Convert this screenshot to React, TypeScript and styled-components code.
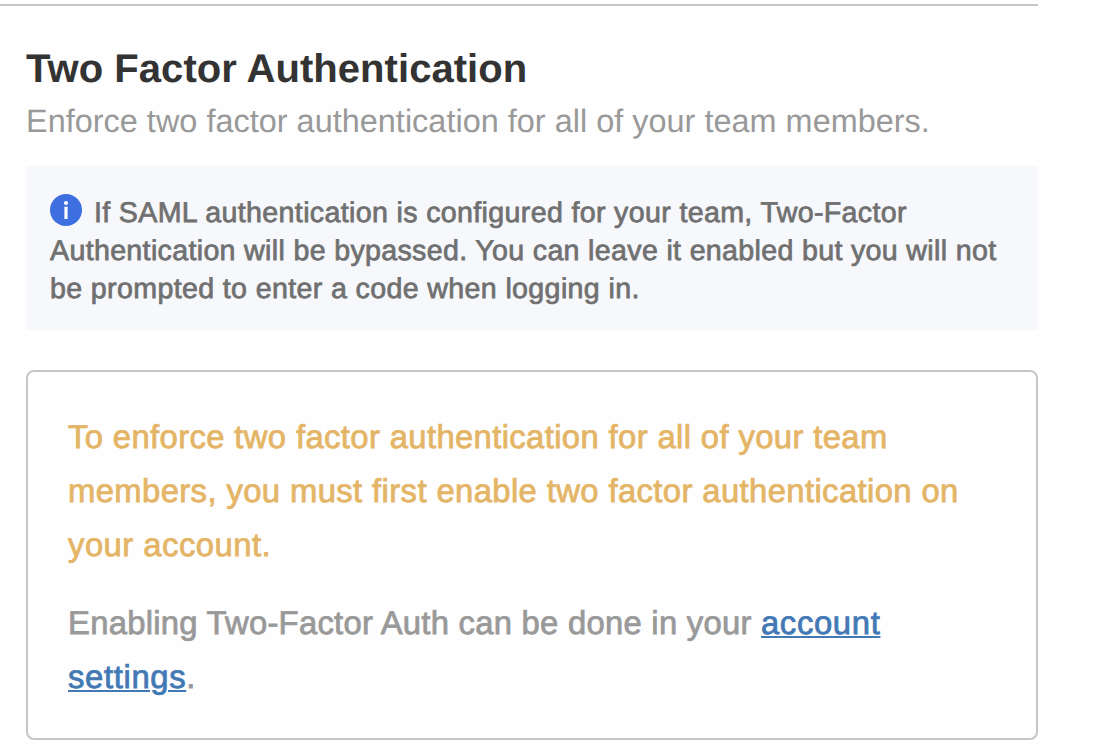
import React from "react";
import styled, { createGlobalStyle } from "styled-components";

const GlobalStyle = createGlobalStyle`
  * { box-sizing: border-box; }
  body {
    margin: 0; background: #fefefe; overflow: hidden;
    font-family: "Liberation Sans", Helvetica, Arial, sans-serif;
    text-rendering: geometricPrecision;
  }
`;
const Section = styled.section`
  width: 1038px;
  height: 754px;
  padding-top: 4px;
`;
const Divider = styled.div`height: 2px; background: #c5c5ca;`;
const Content = styled.div`padding: 38px 0 0 26px;`;
const Line = styled.span<{ $spacing?: number }>`
  display: block;
  white-space: nowrap;
  letter-spacing: ${(p) => p.$spacing ?? 0}px;
`;
const Title = styled.h2`
  margin: 0; font-size: 40px; line-height: 50px; font-weight: 700; color: #333;
`;
const Subtitle = styled.p`
  margin: 2px 0 0; font-size: 32.4px; line-height: 50px; color: #999;
`;
const Notice = styled.div`
  margin-top: 20px; height: 164px; padding: 28px 24px;
  background: #f6f8fc; color: #707070; font-size: 28.6px; line-height: 38px;
  -webkit-text-stroke: 0.75px currentColor;
`;
const NoticeLead = styled.div`display: flex; gap: 12px; height: 38px;`;
const InfoIcon = styled.svg`flex: none; width: 32px; height: 32px;`;
const Panel = styled.div`
  margin-top: 40px; height: 370px; padding: 38px 40px;
  border: 2px solid #c5c5ca; border-radius: 8px;
  font-size: 32.8px; line-height: 54px;
  -webkit-text-stroke: 0.8px currentColor;
`;
const Warning = styled.p`margin: 0; color: #e4b566;`;
const Hint = styled.p`margin: 24px 0 0; color: #999;`;
const Link = styled.a`
  color: #4279b4; letter-spacing: 0.65px; -webkit-text-stroke-color: #4279b4;
  text-decoration: underline; text-decoration-thickness: 2px; text-underline-offset: 2px;
`;

export default function App() {
  return (
    <Section>
      <GlobalStyle />
      <Divider />
      <Content>
        <Title><Line $spacing={0.05}>Two Factor Authentication</Line></Title>
        <Subtitle><Line $spacing={0.03}>Enforce two factor authentication for all of your team members.</Line></Subtitle>
        <Notice>
          <NoticeLead>
            <InfoIcon viewBox="0 0 32 32" aria-hidden="true">
              <circle cx="16" cy="16" r="16" fill="#3d6fe0" />
              <circle cx="16" cy="9" r="2.1" fill="#fff" />
              <path d="M14.4 12.7h3.2V25h-3.2z" fill="#fff" />
            </InfoIcon>
            <Line $spacing={0.345}>If SAML authentication is configured for your team, Two-Factor</Line>
          </NoticeLead>
          <Line $spacing={0.33}>Authentication will be bypassed. You can leave it enabled but you will not</Line>
          <Line $spacing={0.36}>be prompted to enter a code when logging in.</Line>
        </Notice>
        <Panel>
          <Warning>
            <Line $spacing={0.37}>To enforce two factor authentication for all of your team</Line>
            <Line $spacing={0.39}>members, you must first enable two factor authentication on</Line>
            <Line $spacing={0.48}>your account.</Line>
          </Warning>
          <Hint>
            <Line $spacing={0.26}>Enabling Two-Factor Auth can be done in your <Link href="#">account</Link></Line>
            <Line><Link href="#">settings</Link>.</Line>
          </Hint>
        </Panel>
      </Content>
    </Section>
  );
}
